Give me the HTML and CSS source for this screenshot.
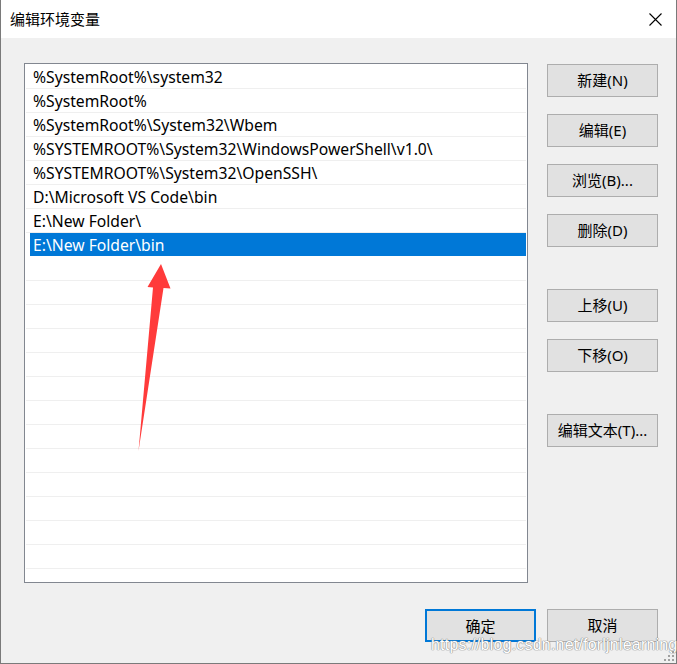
FILE: index.html
```html
<!DOCTYPE html>
<html lang="zh-CN">
<head>
<meta charset="utf-8">
<title>编辑环境变量</title>
<link rel="stylesheet" href="styles.css">
</head>
<body>
<div class="window">
  <div class="titlebar">
    <span class="title">编辑环境变量</span>
    <svg class="close" width="13" height="13" viewBox="0 0 13 13"><path d="M0.5 0.5 L12.5 12.5 M12.5 0.5 L0.5 12.5" stroke="#000" stroke-width="1.1" fill="none"/></svg>
  </div>
  <div class="content">
    <div class="main">
      <div class="listbox">
        <div class="row">%SystemRoot%\system32</div>
        <div class="row">%SystemRoot%</div>
        <div class="row">%SystemRoot%\System32\Wbem</div>
        <div class="row">%SYSTEMROOT%\System32\WindowsPowerShell\v1.0\</div>
        <div class="row">%SYSTEMROOT%\System32\OpenSSH\</div>
        <div class="row">D:\Microsoft VS Code\bin</div>
        <div class="row">E:\New Folder\</div>
        <div class="row selected">E:\New Folder\bin</div>
        <div class="row"></div><div class="row"></div><div class="row"></div><div class="row"></div>
        <div class="row"></div><div class="row"></div><div class="row"></div><div class="row"></div>
        <div class="row"></div><div class="row"></div><div class="row"></div><div class="row"></div>
        <div class="row"></div><div class="row last"></div>
      </div>
      <div class="side">
        <div class="group">
          <button class="btn">新建(N)</button>
          <button class="btn">编辑(E)</button>
          <button class="btn">浏览(B)...</button>
          <button class="btn">删除(D)</button>
        </div>
        <div class="group">
          <button class="btn">上移(U)</button>
          <button class="btn">下移(O)</button>
        </div>
        <div class="group">
          <button class="btn">编辑文本(T)...</button>
        </div>
      </div>
    </div>
    <div class="footer">
      <button class="btn default">确定</button>
      <button class="btn">取消</button>
    </div>
  </div>
  <svg class="arrow" width="677" height="664" viewBox="0 0 677 664">
    <polygon points="161,264 170.5,288.5 163.5,288 138.5,451 153,287.5 147.5,287" fill="#ff3b3b"/>
  </svg>
  <div class="watermark">https://blog.csdn.net/forljnlearning</div>
  <svg class="grip" width="10" height="10" viewBox="0 0 10 10">
    <rect x="8" y="0" width="2" height="2" fill="#a0a0a0"/>
    <rect x="4" y="4" width="2" height="2" fill="#a0a0a0"/>
    <rect x="8" y="4" width="2" height="2" fill="#a0a0a0"/>
    <rect x="0" y="8" width="2" height="2" fill="#a0a0a0"/>
    <rect x="4" y="8" width="2" height="2" fill="#a0a0a0"/>
    <rect x="8" y="8" width="2" height="2" fill="#a0a0a0"/>
  </svg>
</div>
</body>
</html>
```
FILE: styles.css
```css
* { box-sizing: border-box; }
html, body { margin: 0; padding: 0; }
body {
  width: 677px;
  height: 664px;
  overflow: hidden;
  font-family: "Noto Sans", "Noto Sans CJK SC", sans-serif;
  font-size: 15px;
  color: #000;
}
.window {
  position: relative;
  width: 677px;
  height: 664px;
  background: #f0f0f0;
  border: 1px solid #7a7a7a;
  border-top: none;
  display: flex;
  flex-direction: column;
}
.titlebar {
  height: 38px;
  background: #fff;
  display: flex;
  align-items: center;
  justify-content: space-between;
  padding: 0 14px 0 9px;
  flex: none;
}
.title {
  font-family: "Noto Sans CJK SC", sans-serif;
  font-size: 15px;
  line-height: 20px;
  margin-top: -1px;
}
.close { display: block; margin-top: 1px; }
.content {
  padding: 25px 18px 0 23px;
  display: flex;
  flex-direction: column;
}
.main {
  display: flex;
  gap: 19px;
}
.listbox {
  width: 504px;
  height: 520px;
  background: #fff;
  border: 1px solid #828790;
  padding: 1px;
  overflow: hidden;
}
.row {
  height: 24px;
  border-bottom: 1px solid #efefef;
  padding: 2px 0 0 7px;
  font-size: 15.7px;
  line-height: 21px;
  white-space: nowrap;
}
.row.selected {
  background: #0078d7;
  color: #fff;
  box-shadow: inset 4px 0 0 #fff;
  border-bottom-color: #fff;
}
.side {
  display: flex;
  flex-direction: column;
  gap: 42px;
  padding-top: 1px;
}
.group {
  display: flex;
  flex-direction: column;
  gap: 17px;
}
.btn {
  width: 111px;
  height: 33px;
  background: #e1e1e1;
  border: 1px solid #adadad;
  border-radius: 0;
  padding: 0;
  margin: 0;
  font-family: "Noto Sans", "Noto Sans CJK SC", sans-serif;
  font-size: 15px;
  color: #000;
  line-height: 31px;
}
.btn.default {
  border: 2px solid #0078d7;
}
.footer {
  display: flex;
  justify-content: flex-end;
  gap: 11px;
  padding-top: 26px;
}
.arrow {
  position: absolute;
  left: -1px;
  top: 0;
  pointer-events: none;
}
.watermark {
  position: absolute;
  left: 430px;
  top: 636px;
  font-family: "Liberation Sans", sans-serif;
  font-size: 16px;
  letter-spacing: 0.2px;
  color: #fff;
  text-shadow: 0 0 1px #8a8a8a, 0 0 1px #8a8a8a, 0 0 1px #8a8a8a;
  white-space: nowrap;
}
.grip {
  position: absolute;
  right: 2px;
  bottom: 2px;
}
```
